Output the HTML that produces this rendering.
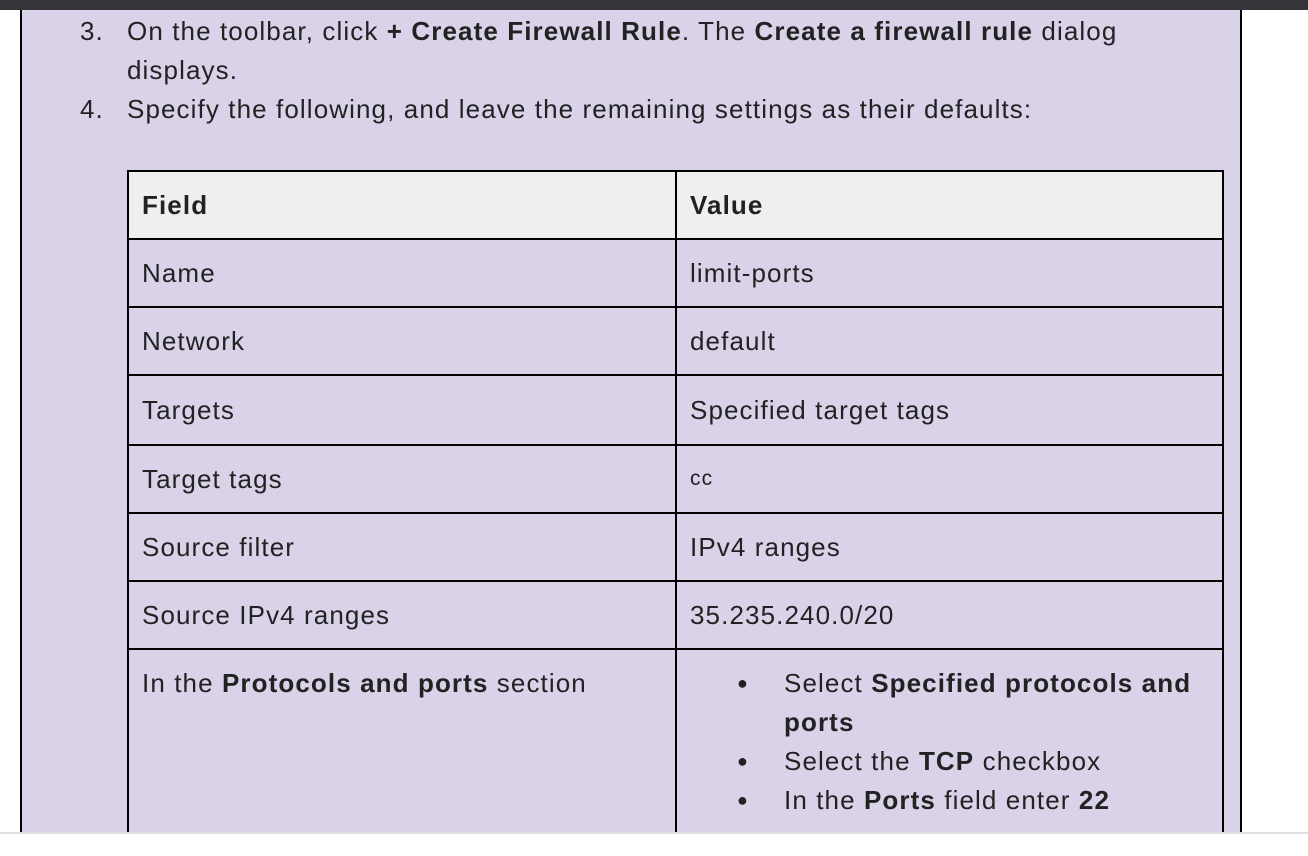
<!DOCTYPE html>
<html><head><style>
*{margin:0;padding:0;box-sizing:border-box}
body{width:1308px;height:856px;background:#fff;position:relative;overflow:hidden;font-family:"Liberation Sans",sans-serif;color:#222;letter-spacing:1.1px}
.bar{position:absolute;left:0;top:0;width:1308px;height:10px;background:#35363a}
.panel{position:absolute;left:20px;top:10px;width:1222px;height:822px;background:#d9d2e9;border-left:2px solid #000;border-right:2px solid #000}
.bot{position:absolute;left:0;top:832px;width:1308px;height:24px;background:#fff;border-top:2px solid #e0e2e6;z-index:5}
.t{position:absolute;font-size:26px;white-space:nowrap;line-height:38px}
b{font-weight:bold}
table{position:absolute;left:127px;top:170px;border-collapse:collapse;width:1097px}
td{border:2px solid #000;font-size:26px;padding:0 13px;height:68px;vertical-align:middle;white-space:nowrap}
tr.h td{background:#efefef;font-weight:bold}
td.tp{vertical-align:top;padding-top:14px;height:200px;line-height:39px}
ul{list-style:none}
li{position:relative;padding-left:107px}
li:before{content:"●";position:absolute;left:60px;font-size:18px}
</style></head><body>
<div class="bar"></div>
<div class="panel"></div>
<div class="t" style="left:80px;top:12px">3.</div>
<div class="t" style="left:127px;top:12px">On the toolbar, click <b>+ Create Firewall Rule</b>. The <b>Create a firewall rule</b> dialog</div>
<div class="t" style="left:127px;top:51px">displays.</div>
<div class="t" style="left:80px;top:90px">4.</div>
<div class="t" style="left:127px;top:90px">Specify the following, and leave the remaining settings as their defaults:</div>
<table>
<tr class="h"><td style="width:548px">Field</td><td>Value</td></tr>
<tr><td>Name</td><td>limit-ports</td></tr>
<tr><td>Network</td><td>default</td></tr>
<tr><td style="height:70px">Targets</td><td>Specified target tags</td></tr>
<tr><td>Target tags</td><td style="font-size:21px">cc</td></tr>
<tr><td>Source filter</td><td>IPv4 ranges</td></tr>
<tr><td>Source IPv4 ranges</td><td>35.235.240.0/20</td></tr>
<tr><td class="tp">In the <b>Protocols and ports</b> section</td><td class="tp" style="padding-left:0">
<ul><li>Select <b>Specified protocols and</b><br><b>ports</b></li><li>Select the <b>TCP</b> checkbox</li><li>In the <b>Ports</b> field enter <b>22</b></li></ul></td></tr>
</table>
<div class="bot"></div>
</body></html>
